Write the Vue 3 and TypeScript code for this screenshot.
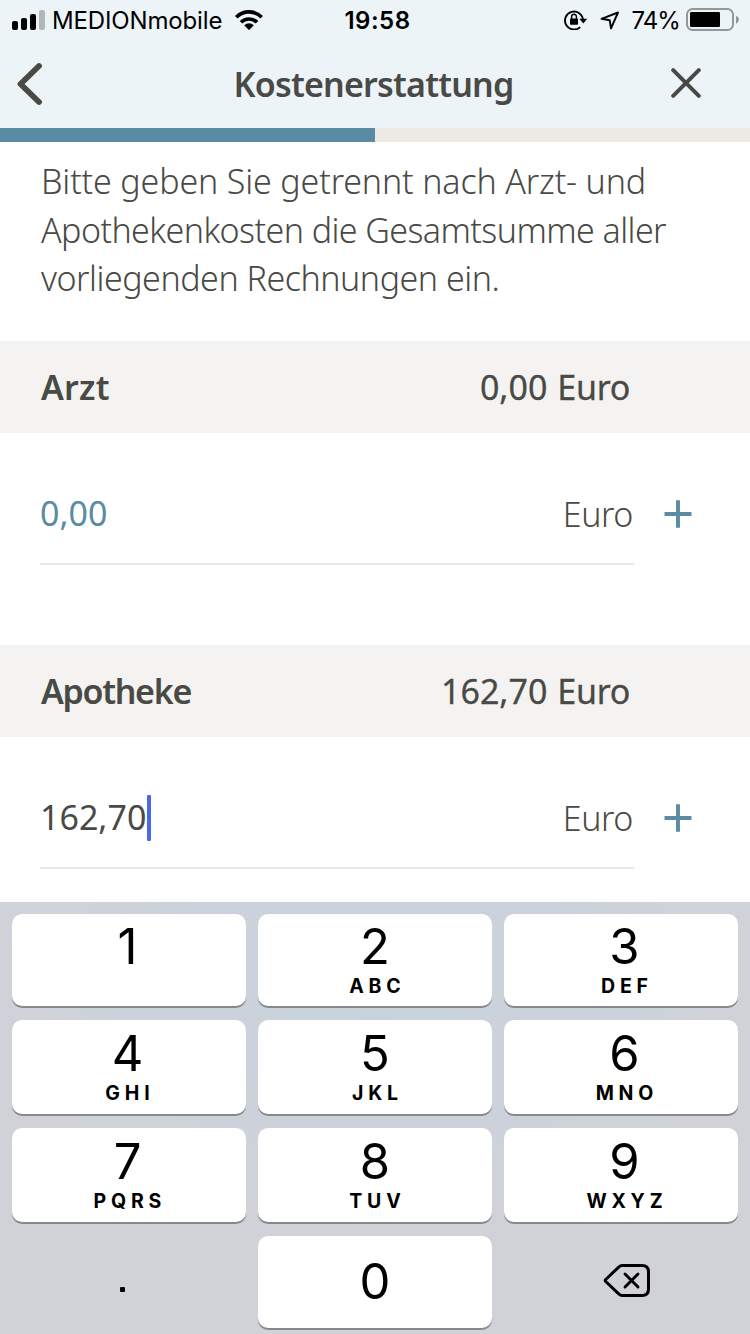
<script setup lang="ts">
interface CostSection {
  name: string
  cls: string
  total: string
  value: string
  active: boolean
}
interface Key {
  digit: string
  letters: string
}

const intro: string[] = [
  'Bitte geben Sie getrennt nach Arzt- und',
  'Apothekenkosten die Gesamtsumme aller',
  'vorliegenden Rechnungen ein.',
]
const sections: CostSection[] = [
  { name: 'Arzt', cls: 'arzt', total: '0,00', value: '0,00', active: false },
  { name: 'Apotheke', cls: 'apotheke', total: '162,70', value: '162,70', active: true },
]
const keys: Key[] = [
  { digit: '1', letters: '' },
  { digit: '2', letters: 'ABC' },
  { digit: '3', letters: 'DEF' },
  { digit: '4', letters: 'GHI' },
  { digit: '5', letters: 'JKL' },
  { digit: '6', letters: 'MNO' },
  { digit: '7', letters: 'PQRS' },
  { digit: '8', letters: 'TUV' },
  { digit: '9', letters: 'WXYZ' },
]
</script>

<template>
  <div class="screen">
    <header class="top">
      <div class="status">
        <div class="carrier">
          <svg class="signal" width="34" height="20" viewBox="0 0 34 20">
            <rect x="0" y="11" width="6" height="9" rx="2" />
            <rect x="9" y="8" width="6" height="12" rx="2" />
            <rect x="18" y="4" width="6" height="16" rx="2" />
            <rect x="27" y="0" width="6" height="20" rx="2" fill="#b2b8ba" />
          </svg>
          <span class="carrier-name">MEDIONmobile</span>
          <svg class="wifi" width="28" height="20" viewBox="0 0 28 20">
            <g fill="none" stroke="#000" stroke-width="3.7">
              <path d="M1.3 7.2A18 18 0 0 1 26.7 7.2" />
              <path d="M6 12.3A11.4 11.4 0 0 1 22 12.3" />
            </g>
            <path d="M9.2 15.2A7 7 0 0 1 18.8 15.2L14.7 19.5Q14 20.2 13.3 19.5Z" />
          </svg>
        </div>
        <span class="time">19:58</span>
        <div class="indicators">
          <svg class="lock" width="24" height="20" viewBox="0 1 24 20">
            <path d="M16.2 18.1A9 9 0 1 1 19 11" fill="none" stroke="#000" stroke-width="1.9" />
            <path d="M15.3 9.8H23.3L19.3 14.6Z" />
            <rect x="6" y="9.4" width="8" height="6.4" rx="0.8" />
            <path d="M7.6 10V7.8A2.4 2.6 0 0 1 12.4 7.8V10" fill="none" stroke="#000" stroke-width="1.5" />
          </svg>
          <svg class="location" width="20" height="20" viewBox="0 0 20 20">
            <path d="M1.5 8.8L18 2.5L11 18.3L9.7 10.2Z" fill="none" stroke="#000" stroke-width="1.9" stroke-linejoin="round" />
          </svg>
          <span class="percent">74%</span>
          <svg class="battery" width="54" height="24" viewBox="0 0 54 24">
            <rect x="1" y="1" width="46" height="21" rx="5.5" fill="none" stroke="#929799" stroke-width="2" />
            <rect x="4" y="4" width="30" height="15" rx="1.2" />
            <path d="M50 8Q53 9 53 11.5T50 16Z" fill="#929799" />
          </svg>
        </div>
      </div>
      <nav class="nav">
        <svg class="back" width="26" height="44" viewBox="0 0 26 44">
          <path d="M22 4L3.5 22L22 40" fill="none" stroke="#494945" stroke-width="5.8" stroke-linecap="round" stroke-linejoin="round" />
        </svg>
        <h1 class="title">Kostenerstattung</h1>
        <svg class="close" width="30" height="30" viewBox="0 0 30 30">
          <path d="M2.2 2.2L27.8 27.8M27.8 2.2L2.2 27.8" stroke="#494945" stroke-width="4" stroke-linecap="round" />
        </svg>
      </nav>
    </header>
    <div class="progress"><div class="done"></div></div>

    <p class="intro">
      <span v-for="(line, i) in intro" :key="i" :class="['line', 'line' + (i + 1)]">{{ line }}</span>
    </p>

    <section v-for="s in sections" :key="s.name" :class="['section', s.cls]">
      <div class="bar">
        <h2 class="name">{{ s.name }}</h2>
        <div class="total"><span>{{ s.total }}</span><span class="total-unit">Euro</span></div>
      </div>
      <div class="entry">
        <div class="field">
          <span :class="['value', { active: s.active }]">{{ s.value }}</span>
          <span v-if="s.active" class="caret"></span>
          <span class="unit">Euro</span>
        </div>
        <svg class="plus" width="28" height="28" viewBox="0 0 28 28">
          <path d="M0.5 14H27.5M14 0.3V27.7" stroke="#598ca2" stroke-width="3.9" />
        </svg>
      </div>
    </section>

    <div class="keyboard">
      <div v-for="k in keys" :key="k.digit" class="key">
        <span class="digit">{{ k.digit }}</span>
        <span class="letters">{{ k.letters }}</span>
      </div>
      <div class="bare"><span class="dot"></span></div>
      <div class="key zero"><span class="digit">0</span></div>
      <div class="bare">
        <svg class="delete" width="48" height="36" viewBox="0 0 48 36">
          <g fill="none" stroke="#000" stroke-linecap="round" stroke-linejoin="round">
            <path d="M19 2.5H39Q45.5 2.5 45.5 9V26Q45.5 32.5 39 32.5H19Q17.5 32.5 16 31.2L2.7 18.5Q1.8 17.5 2.7 16.5L16 3.8Q17.5 2.5 19 2.5Z" stroke-width="3" />
            <path d="M22 11L35 24M35 11L22 24" stroke-width="2.9" />
          </g>
        </svg>
      </div>
    </div>
  </div>
</template>

<style>
body {
  margin: 0;
  background: #fff;
}
</style>

<style scoped>
.screen {
  width: 750px;
  height: 1334px;
  overflow: hidden;
  display: flex;
  flex-direction: column;
  background: #fff;
  color: #494945;
  font-family: "Noto Sans", "Open Sans", sans-serif;
  font-size: 34px;
  line-height: 48px;
  white-space: nowrap;
}
svg {
  display: block;
  flex: none;
}
h1, h2, p {
  margin: 0;
  font-size: inherit;
}
.top {
  height: 128px;
  background: #ecf4f8;
}
.status {
  height: 40px;
  display: grid;
  grid-template-columns: 1fr auto 1fr;
  font: 400 24px/38px Inter, "Liberation Sans", sans-serif;
  color: #000;
}
.carrier, .indicators {
  display: flex;
  align-items: center;
}
.carrier {
  padding-left: 12px;
}
.carrier-name {
  width: 170px;
  margin: 2px 13px 0 6px;
  letter-spacing: -0.15px;
}
.time {
  margin: 2px 0 0 5px;
  font-weight: 600;
  letter-spacing: 0.5px;
}
.indicators {
  justify-content: flex-end;
  padding-right: 10px;
}
.location {
  margin-left: 12px;
}
.percent {
  margin: 2px 6px 0 11px;
  letter-spacing: -0.9px;
}
.nav {
  height: 88px;
  display: flex;
  align-items: center;
  padding: 0 49px 0 17px;
  justify-content: space-between;
}
.title {
  width: 280px;
  font-weight: 600;
  letter-spacing: -0.78px;
  margin-left: 33px;
}
.close {
  margin-bottom: 2px;
}
.progress {
  height: 14px;
  background: #ede9e5;
}
.done {
  width: 50%;
  height: 100%;
  background: #598ca2;
}
.intro {
  height: 199px;
  box-sizing: border-box;
  padding: 15px 40px 0 41px;
  font-weight: 300;
}
.line {
  display: block;
  height: 48.5px;
}
.line1 {
  letter-spacing: -0.14px;
}
.line2 {
  letter-spacing: -0.57px;
}
.line3 {
  letter-spacing: -0.47px;
}
.section {
  height: 304px;
  flex: none;
}
.bar {
  height: 92px;
  background: #f4f3f1;
  display: flex;
  align-items: center;
  justify-content: space-between;
  padding: 0 120px 0 41px;
}
.name {
  font-weight: 600;
}
.arzt .name {
  letter-spacing: 0.2px;
}
.apotheke .name {
  letter-spacing: -1.3px;
}
.total {
  display: flex;
  gap: 10px;
  font-weight: 400;
  -webkit-text-stroke: 0.3px #494945;
}
.total-unit {
  letter-spacing: -0.3px;
}
.entry {
  display: flex;
  padding: 40px 0 0 40px;
}
.field {
  width: 594px;
  height: 92px;
  box-sizing: border-box;
  border-bottom: 2px solid #e9e6e3;
  display: flex;
  align-items: center;
  padding-bottom: 8px;
}
.value {
  color: #598ca2;
  font-weight: 400;
  margin-top: -2px;
}
.value.active {
  color: #494945;
  width: 107px;
}
.caret {
  width: 4px;
  height: 46px;
  border-radius: 1px;
  background: #4a69ea;
}
.unit {
  margin: 0 1px 0 auto;
  font-weight: 300;
  letter-spacing: -0.4px;
}
.plus {
  margin: 27px 0 0 29.5px;
}
.keyboard {
  position: absolute;
  left: 0;
  top: 902px;
  width: 750px;
  height: 432px;
  box-sizing: border-box;
  padding: 12px 12px 0;
  display: grid;
  grid-template-columns: repeat(3, 234px);
  grid-template-rows: 92px 94px 94px 92px;
  gap: 14px 12px;
  background: radial-gradient(ellipse 420px 270px at 50% 15%, #c9d2db 0%, #cbd2db 45%, #d1d2d8 100%);
  color: #000;
  font-family: Inter, "Liberation Sans", sans-serif;
}
.key {
  background: #fff;
  border-radius: 10px;
  box-shadow: 0 2px 0 #86898e;
  box-sizing: border-box;
  display: flex;
  flex-direction: column;
  align-items: center;
  padding-top: 4px;
}
.key:nth-child(-n + 3) {
  padding-top: 3px;
}
.key:nth-child(3n + 1) {
  padding-right: 3px;
}
.key:nth-child(3n) {
  padding-left: 7px;
}
.digit {
  font-size: 49px;
  line-height: 60px;
}
.letters {
  font-size: 19.5px;
  font-weight: 700;
  line-height: 20px;
  letter-spacing: 4.8px;
  margin: -1px -4.8px 0 0;
}
.key.zero {
  padding-top: 16px;
}
.bare {
  display: flex;
  align-items: center;
  justify-content: center;
}
.dot {
  width: 5px;
  height: 5px;
  border-radius: 1px;
  background: #000;
  margin: 14px 14px 0 0;
}
.delete {
  margin: -3px 0 0 11px;
}
</style>
